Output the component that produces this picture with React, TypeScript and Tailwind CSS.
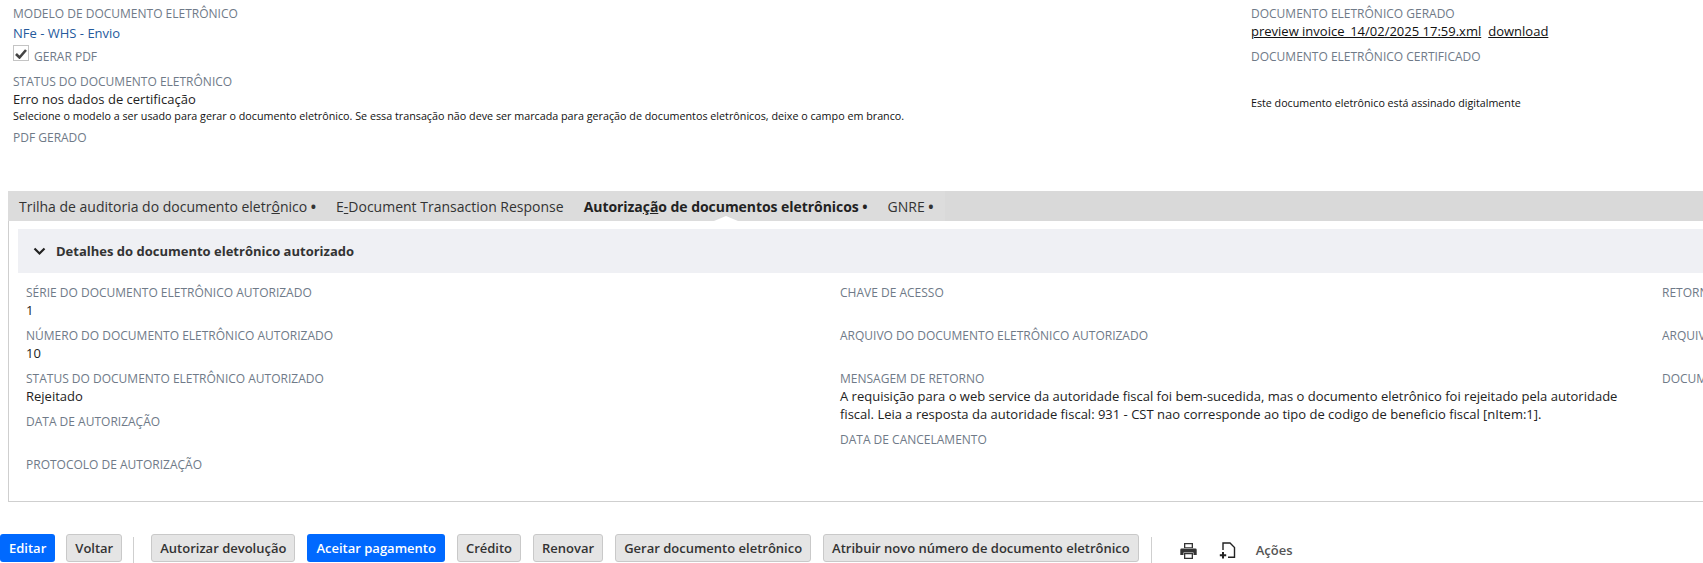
const Label = ({ children }: { children?: React.ReactNode }) => (
  <div className="text-[12px] leading-[17px] uppercase text-[#6f7a88] whitespace-nowrap">{children}</div>
);

const Field = ({ label, value }: { label: string; value?: string }) => (
  <div className="h-[43px]">
    <Label>{label}</Label>
    {value && <div className="text-[13px] leading-[17px] mt-px text-[#222]">{value}</div>}
  </div>
);

const Btn = ({ children, primary }: { children: React.ReactNode; primary?: boolean }) => (
  <button
    className={
      primary
        ? "h-[28px] px-[9px] pt-px rounded-[3px] bg-[#0069ff] text-white text-[13px] font-semibold whitespace-nowrap"
        : "h-[28px] px-[8px] pt-px rounded-[3px] bg-[#e5e5e5] border border-[#c9c9c9] text-[#333] text-[13px] font-semibold whitespace-nowrap"
    }
  >
    {children}
  </button>
);

const Sep = () => <div className="w-px h-[26px] bg-[#cfcfcf] self-end" />;

const Dot = () => <span className="font-bold">•</span>;

const tabs = [
  { id: "audit", node: <>Trilha de auditoria do documento eletr<u>ô</u>nico <Dot /></> },
  { id: "resp", node: <>E<u>-</u>Document Transaction Response</> },
  { id: "auth", node: <>Autoriza<u>ç</u><u>ã</u>o de documentos eletrônicos <Dot /></>, active: true },
  { id: "gnre", node: <>GNRE <Dot /></> },
];

const App = () => {
  return (
    <div className="w-[1703px] h-[563px] overflow-hidden bg-white font-['Open_Sans',sans-serif] flex flex-col">
      {/* Cabeçalho */}
      <div className="flex h-[191px] pt-[5px] pl-[13px]">
        <div className="w-[1238px]">
          <Label>Modelo de documento eletrônico</Label>
          <div className="text-[13px] leading-[18px] mt-[2px] text-[#255a9c]">NFe - WHS - Envio</div>
          <div className="flex items-end gap-[5px] h-[22px] mt-[1px]">
            <span className="w-[16px] h-[16px] border border-[#c4c4c4] flex items-center justify-center mb-[4px]">
              <svg width="12" height="11" viewBox="0 0 12 11">
                <path d="M1 6l3.5 3.5L11 2" fill="none" stroke="#444" strokeWidth="2.6" />
              </svg>
            </span>
            <span className="text-[12px] leading-[17px] uppercase text-[#6f7a88]">Gerar PDF</span>
          </div>
          <div className="mt-[8px]">
            <Label>Status do documento eletrônico</Label>
          </div>
          <div className="text-[13px] leading-[18px] text-[#222]">Erro nos dados de certificação</div>
          <div className="text-[10.75px] leading-[16px] text-[#111] whitespace-nowrap">
            Selecione o modelo a ser usado para gerar o documento eletrônico. Se essa transação não deve ser marcada para geração de documentos eletrônicos, deixe o campo em branco.
          </div>
          <div className="mt-[5px]">
            <Label>PDF gerado</Label>
          </div>
        </div>
        <div>
          <Label>Documento eletrônico gerado</Label>
          <div className="text-[13px] leading-[18px] text-[#111] flex gap-[7px]">
            <u>preview invoice_14/02/2025 17:59.xml</u>
            <u>download</u>
          </div>
          <div className="mt-[8px]">
            <Label>Documento eletrônico certificado</Label>
          </div>
          <div className="text-[10.7px] leading-[16px] text-[#111] mt-[30px]">Este documento eletrônico está assinado digitalmente</div>
        </div>
      </div>

      {/* Abas */}
      <div className="ml-[8px] h-[30px] bg-[#d9d9d9] flex">
        <div className="relative flex items-center bg-[#dcdcdc] w-[937px] pl-[11px] gap-[20px] text-[14px] text-[#333] whitespace-nowrap">
          {tabs.map((t) => (
            <span key={t.id} className={t.active ? "font-bold text-[#222] -tracking-[0.05px]" : ""}>
              {t.node}
            </span>
          ))}
          <div className="absolute left-[706px] bottom-0 w-0 h-0 border-l-[12px] border-r-[12px] border-b-[5px] border-l-transparent border-r-transparent border-b-white" />
        </div>
      </div>

      {/* Painel */}
      <div className="ml-[8px] h-[281px] border-l border-b border-[#cfcfcf] pt-[8px] pl-[9px]">
        <div className="h-[44px] bg-[#eff0f4] flex items-center pl-[15px] gap-[10px]">
          <svg width="13" height="9" viewBox="0 0 13 9">
            <path d="M1.5 1.5L6.5 6.5L11.5 1.5" fill="none" stroke="#222" strokeWidth="2.2" />
          </svg>
          <span className="text-[13px] font-bold text-[#333] pt-px">Detalhes do documento eletrônico autorizado</span>
        </div>
        <div className="flex pt-[11px] pl-[8px]">
          <div className="w-[814px] shrink-0">
            <Field label="Série do documento eletrônico autorizado" value="1" />
            <Field label="Número do documento eletrônico autorizado" value="10" />
            <Field label="Status do documento eletrônico autorizado" value="Rejeitado" />
            <Field label="Data de autorização" />
            <Field label="Protocolo de autorização" />
          </div>
          <div className="w-[822px] shrink-0">
            <Field label="Chave de acesso" />
            <Field label="Arquivo do documento eletrônico autorizado" />
            <div className="mb-[8px]">
              <Label>Mensagem de retorno</Label>
              <div className="text-[13px] leading-[18px] text-[#222] w-[790px]">
                A requisição para o web service da autoridade fiscal foi bem-sucedida, mas o documento eletrônico foi rejeitado pela autoridade fiscal. Leia a resposta da autoridade fiscal: 931 - CST nao corresponde ao tipo de codigo de beneficio fiscal [nItem:1].
              </div>
            </div>
            <Field label="Data de cancelamento" />
          </div>
          <div className="w-[41px] shrink-0 overflow-hidden">
            <Field label="Retorno" />
            <Field label="Arquivo" />
            <Field label="Documento" />
          </div>
        </div>
      </div>

      {/* Barra de ações */}
      <div className="flex items-start h-[29px] mt-[32px]">
        <div className="mr-[11px]">
          <Btn primary>Editar</Btn>
        </div>
        <div className="mr-[11px]">
          <Btn>Voltar</Btn>
        </div>
        <Sep />
        <div className="flex gap-[12px] h-[29px] ml-[17px] mr-[12px]">
          <Btn>Autorizar devolução</Btn>
          <Btn primary>Aceitar pagamento</Btn>
          <Btn>Crédito</Btn>
          <Btn>Renovar</Btn>
          <Btn>Gerar documento eletrônico</Btn>
          <Btn>Atribuir novo número de documento eletrônico</Btn>
        </div>
        <Sep />
        <div className="flex items-center gap-[22px] ml-[28px] h-[29px] pt-[4px]">
          <svg width="17" height="16" viewBox="0 0 17 16" fill="#333">
            <path d="M4 0h9v5H4zM5.3 1.3v3h6.4v-3z" fillRule="evenodd" />
            <path d="M1.5 5.5h14a1.2 1.2 0 0 1 1.2 1.2v5.3H13.5V9.5h-10V12H.3V6.7a1.2 1.2 0 0 1 1.2-1.2z" />
            <path d="M4 10h9v6H4zM5.3 11.3v3.4h6.4v-3.4z" fillRule="evenodd" />
          </svg>
          <svg width="17" height="17" viewBox="0 0 17 17" fill="none" stroke="#222" strokeWidth="1.4">
            <path d="M4 8V1h7l4.5 4.5V15.3H9" />
            <path d="M4 10v6.5M.8 13.2h6.4" strokeWidth="2" />
          </svg>
          <span className="text-[13px] font-semibold text-[#555] -ml-[2px]">Ações</span>
        </div>
      </div>
    </div>
  );
};

export default App;
